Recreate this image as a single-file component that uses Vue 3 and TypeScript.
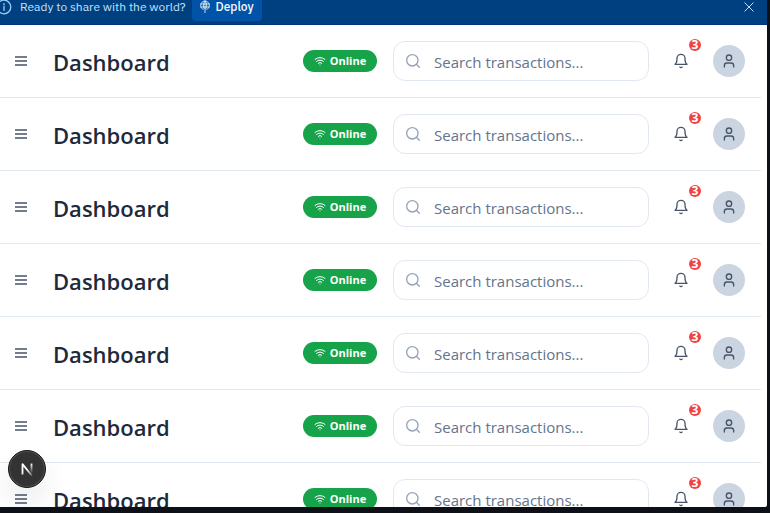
<script setup lang="ts">
interface HeaderRow {
  id: number
  title: string
  status: string
  alerts: number
}

const rows: HeaderRow[] = Array.from({ length: 7 }, (_, i) => ({
  id: i + 1,
  title: 'Dashboard',
  status: 'Online',
  alerts: 3,
}))
</script>

<template>
  <div class="shell">
    <div class="screen">
      <div class="banner">
        <svg class="info" viewBox="0 0 16 16" aria-hidden="true">
          <circle cx="8" cy="8" r="6.8" />
          <path d="M8 7.4v4M8 4.6v1.2" />
        </svg>
        <span class="banner-text">Ready to share with the world?</span>
        <button type="button" class="deploy">
          <svg viewBox="0 0 12 14" aria-hidden="true">
            <path d="M3.4 9A4.4 4.4 0 1 1 8.6 9M1.8 4h8.4M1.8 7h8.4M6 1C4.2 2.6 4 5.6 4.4 7.4M6 1C7.8 2.6 8 5.6 7.6 7.4M6 1V12.6M4.2 9.4L6 7.6l1.8 1.8" />
          </svg>
          <span>Deploy</span>
        </button>
        <button type="button" class="close" aria-label="Close">
          <svg viewBox="0 0 10 10" aria-hidden="true"><path d="M.8.8l8.4 8.4M9.2.8L.8 9.2" /></svg>
        </button>
      </div>

      <main class="rows">
        <header v-for="row in rows" :key="row.id" class="row">
          <button type="button" class="menu" aria-label="Menu">
            <svg viewBox="0 0 12 10" aria-hidden="true"><path d="M0 1h12M0 5h12M0 9h12" /></svg>
          </button>
          <h1>{{ row.title }}</h1>
          <span class="status">
            <svg viewBox="0 0 24 24" aria-hidden="true">
              <path d="M12 20h.01M2 8.82a15 15 0 0 1 20 0M5 12.86a10 10 0 0 1 14 0M8.5 16.43a5 5 0 0 1 7 0" />
            </svg>
            <span>{{ row.status }}</span>
          </span>
          <label class="search">
            <svg viewBox="0 0 24 24" aria-hidden="true">
              <circle cx="11" cy="11" r="8.5" />
              <path d="M21.5 21.5l-4.5-4.5" />
            </svg>
            <input type="search" placeholder="Search transactions..." aria-label="Search transactions" />
          </label>
          <button type="button" class="bell" aria-label="Notifications">
            <svg viewBox="0 0 24 24" aria-hidden="true">
              <path d="M6 8a6 6 0 0 1 12 0c0 7 3 9 3 9H3s3-2 3-9M10.3 21a1.94 1.94 0 0 0 3.4 0" />
            </svg>
            <span class="count">{{ row.alerts }}</span>
          </button>
          <button type="button" class="avatar" aria-label="Account">
            <svg viewBox="0 0 24 24" aria-hidden="true">
              <path d="M19 21v-2a4 4 0 0 0-4-4H9a4 4 0 0 0-4 4v2" />
              <circle cx="12" cy="7" r="4" />
            </svg>
          </button>
        </header>
      </main>

      <button type="button" class="dev" aria-label="Developer tools">
        <svg viewBox="0 0 40 40" aria-hidden="true">
          <defs>
            <linearGradient id="dev-diagonal" gradientUnits="userSpaceOnUse" x1="20" y1="20" x2="26" y2="28">
              <stop offset="0" stop-color="#fff" />
              <stop offset="0.7" stop-color="#fff" stop-opacity="0.5" />
              <stop offset="1" stop-color="#fff" stop-opacity="0" />
            </linearGradient>
            <linearGradient id="dev-stem" gradientUnits="userSpaceOnUse" x1="0" y1="14" x2="0" y2="25">
              <stop offset="0" stop-color="#fff" />
              <stop offset="1" stop-color="#fff" stop-opacity="0" />
            </linearGradient>
          </defs>
          <path d="M15 26V14.6L26 28" stroke="url(#dev-diagonal)" />
          <path d="M25 14v10.5" stroke="url(#dev-stem)" />
        </svg>
      </button>
    </div>
  </div>
</template>

<style>
body {
  background: #0d1117;
}
</style>

<style scoped>
.shell {
  box-sizing: border-box;
  height: 100vh;
  padding: 0 3px 6px 0;
  overflow: hidden;
  font-family: 'Segoe UI', 'Open Sans', sans-serif;
}

.screen {
  position: relative;
  display: flex;
  flex-direction: column;
  height: 100%;
  overflow: hidden;
  background: #fff;
  border-radius: 0 0 2px 0;
}

button {
  display: flex;
  align-items: center;
  justify-content: center;
  padding: 0;
  border: 0;
  background: none;
  font: inherit;
  cursor: pointer;
}

svg {
  flex: none;
  fill: none;
  stroke: currentColor;
  stroke-linecap: round;
  stroke-linejoin: round;
}

.banner {
  box-sizing: border-box;
  display: flex;
  flex: none;
  align-items: flex-start;
  height: 25px;
  padding-right: 13px;
  border-bottom: 1px solid #00357a;
  background: #004080;
  color: #c2e0ff;
  font-family: 'IBM Plex Sans', 'Inter', sans-serif;
  font-size: 12px;
  line-height: 14px;
}

.info {
  width: 16px;
  height: 16px;
  margin: -1px 0 0 -4px;
  stroke-width: 1.3;
  color: #99ceff;
}

.banner-text {
  margin-left: 8px;
  white-space: nowrap;
}

.deploy {
  align-items: flex-start;
  gap: 4px;
  width: 70px;
  height: 21px;
  margin-left: 6px;
  border-radius: 0 0 4px 4px;
  background: #0053a6;
  color: #f5f9fc;
  font-weight: 500;
}

.deploy svg {
  width: 12px;
  height: 14px;
  stroke-width: 0.8;
}

.close {
  height: 14px;
  margin-left: auto;
  color: #c2e0ff;
}

.close svg {
  width: 10px;
  height: 10px;
}

.rows {
  margin-right: 6px;
}

.row {
  box-sizing: border-box;
  display: flex;
  align-items: center;
  height: 73px;
  padding: 0 16px 0 15px;
  border-bottom: 1px solid #e2e8f0;
}

.menu svg {
  width: 12px;
  height: 10px;
  stroke-width: 2;
  stroke-linecap: butt;
  color: #737d8c;
}

h1 {
  flex: 1;
  margin: 0 0 0 26px;
  padding-top: 2px;
  color: #1e293b;
  font-size: 22px;
  font-weight: 600;
  line-height: 32px;
}

.status {
  box-sizing: border-box;
  display: flex;
  flex: none;
  align-items: center;
  justify-content: center;
  gap: 4px;
  width: 74px;
  height: 22px;
  border-radius: 11px;
  background: #16a34a;
  color: #fff;
  font-size: 11px;
  font-weight: 700;
  line-height: 16px;
}

.status svg {
  width: 12px;
  height: 12px;
  stroke-width: 2;
}

.search {
  box-sizing: border-box;
  display: flex;
  flex: none;
  align-items: center;
  gap: 13px;
  width: 256px;
  height: 40px;
  margin-left: 16px;
  padding: 0 12px 0 11px;
  border: 1px solid #e2e8f0;
  border-radius: 12px;
}

.search svg {
  width: 16px;
  height: 16px;
  stroke-width: 2;
  color: #94a3b8;
}

.search input {
  flex: 1;
  min-width: 0;
  padding: 2px 0 0;
  border: 0;
  outline: 0;
  background: none;
  color: #1e293b;
  font: 15px/24px 'Segoe UI', 'Open Sans', sans-serif;
}

.search input::placeholder {
  color: #64748b;
  opacity: 1;
}

.bell {
  position: relative;
  flex: none;
  width: 32px;
  height: 32px;
  margin-left: 16px;
  color: #475569;
}

.bell svg,
.avatar svg {
  width: 16px;
  height: 16px;
  stroke-width: 2;
}

.count {
  position: absolute;
  top: -6px;
  right: -4px;
  width: 12px;
  height: 12px;
  border-radius: 50%;
  background: #ef4444;
  color: #fff;
  font-size: 12px;
  font-weight: 700;
  line-height: 12px;
  text-align: center;
}

.avatar {
  flex: none;
  width: 32px;
  height: 32px;
  margin-left: 16px;
  border-radius: 50%;
  background: #cbd5e1;
  color: #475569;
}

.dev {
  position: absolute;
  bottom: 19px;
  left: 8px;
  width: 38px;
  height: 38px;
  border: 1px solid #171717;
  border-radius: 50%;
  background: #333;
  box-shadow: inset 0 0 0 1px #505050, 0 16px 32px -8px rgba(0, 0, 0, 0.24);
}

.dev svg {
  width: 36px;
  height: 36px;
  stroke-width: 2;
  stroke-linecap: butt;
}
</style>
